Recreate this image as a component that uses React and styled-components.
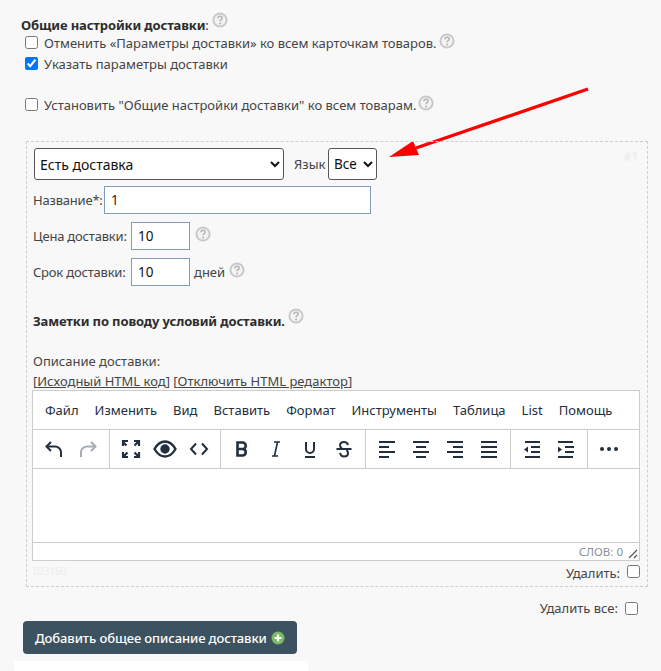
import React from "react";
import styled, { createGlobalStyle } from "styled-components";

const Global = createGlobalStyle`
  html, body { margin: 0; padding: 0; background: #f8f8f8; }
  body { font-family: "Noto Sans", "Open Sans", sans-serif; font-size: 13px; color: #444; }
`;

const Help = () => (
  <HelpIcon viewBox="0 0 16 16">
    <circle cx="8" cy="8" r="6.6" fill="#f3f3f3" stroke="#c9c9c9" strokeWidth="2" />
    <path d="M5.9 6.3c.1-1.3 1-2 2.2-2 1.2 0 2.1.7 2.1 1.8 0 1.6-2.1 1.6-2.1 3.2" fill="none" stroke="#b4b4b4" strokeWidth="1.5" />
    <circle cx="8.1" cy="11.4" r="1" fill="#b4b4b4" />
  </HelpIcon>
);

const Ico = ({ children, sw = 2, fill = "none", color = "#222f3e" }) => (
  <ToolSvg viewBox="0 0 24 24" fill={fill} stroke={color} strokeWidth={sw}>
    {children}
  </ToolSvg>
);

const lines = (rows) =>
  rows.map(([a, b, y], i) => <path key={i} d={`M${a} ${y}H${b}`} />);

const App = () => (
  <Page>
    <Global />
    <Arrow viewBox="0 0 240 80">
      <path d="M204 2 L32 61" stroke="#ff0000" strokeWidth="3.4" fill="none" />
      <path d="M5 70 L29 54 L35 68 Z" fill="#ff0000" />
    </Arrow>
    <Heading>
      <b>Общие настройки доставки</b>: <Help />
    </Heading>
    <CheckRow>
      <Check type="checkbox" readOnly />
      <span>Отменить «Параметры доставки» ко всем карточкам товаров.</span>
      <RowHelp><Help /></RowHelp>
    </CheckRow>
    <CheckRow>
      <Check type="checkbox" defaultChecked />
      <span>Указать параметры доставки</span>
    </CheckRow>
    <CheckRow $top={20}>
      <Check type="checkbox" readOnly />
      <span>Установить "Общие настройки доставки" ко всем товарам.</span>
      <RowHelp><Help /></RowHelp>
    </CheckRow>

    <Box>
      <BoxNum>#1</BoxNum>
      <SelectRow>
        <Select $w={250} $fs={14} defaultValue="a">
          <option value="a">Есть доставка</option>
        </Select>
        <LangLabel>Язык</LangLabel>
        <Select $w={49} $fs={13.5} defaultValue="a">
          <option value="a">Все</option>
        </Select>
      </SelectRow>
      <FieldRow $top={6}>
        <FieldLabel $w={68}>Название*:</FieldLabel>
        <TextInput $w={267} $red defaultValue="1" />
      </FieldRow>
      <FieldRow $top={8}>
        <FieldLabel $w={95}>Цена доставки:</FieldLabel>
        <TextInput $w={59} defaultValue="10" />
        <PriceHelp><Help /></PriceHelp>
      </FieldRow>
      <FieldRow $top={8}>
        <FieldLabel $w={95}>Срок доставки:</FieldLabel>
        <TextInput $w={59} defaultValue="10" />
        <Days>дней</Days>
        <TermHelp><Help /></TermHelp>
      </FieldRow>
      <Notes>
        <b>Заметки по поводу условий доставки.</b> <Help />
      </Notes>
      <DescLabel>Описание доставки:</DescLabel>
      <Links>
        [<a>Исходный HTML код</a>] [<a>Отключить HTML редактор</a>]
      </Links>
      <Editor>
        <MenuBar>
          {["Файл", "Изменить", "Вид", "Вставить", "Формат", "Инструменты", "Таблица", "List", "Помощь"].map((m) => (
            <span key={m}>{m}</span>
          ))}
        </MenuBar>
        <ToolBar>
          <ToolGroup>
            <Tool><Ico><path d="M9 5L4.5 9.5 9 14" /><path d="M5 9.5h8a6 6 0 0 1 6 6V20" /></Ico></Tool>
            <Tool><Ico color="#a8adb3"><path d="M15 5l4.5 4.5L15 14" /><path d="M19 9.5h-8a6 6 0 0 0-6 6V20" /></Ico></Tool>
          </ToolGroup>
          <ToolGroup>
            <Tool><Ico sw={2.2}><path d="M4 9V4h5M4 5l3.5 3.5M15 4h5v5M19 5l-3.5 3.5M4 15v5h5M5 19l3.5-3.5M20 15v5h-5M19 19l-3.5-3.5" /></Ico></Tool>
            <Tool>
              <Ico sw={2.4}><path d="M1.5 12C5 6 8.5 4.5 12 4.5s7 1.5 10.5 7.5C19 18 15.5 19.5 12 19.5S5 18 1.5 12z" /><circle cx="12" cy="12" r="3.5" fill="#222f3e" /></Ico>
            </Tool>
            <Tool><Ico sw={2}><path d="M9 6.5L4 12l5 5.5M15 6.5l5 5.5-5 5.5" /></Ico></Tool>
          </ToolGroup>
          <ToolGroup>
            <Tool><Ico sw={2.6}><path d="M7.5 5.5h5a3.2 3.2 0 0 1 0 6.5h-5zM7.5 12h5.5a3.3 3.3 0 0 1 0 6.5H7.5z" /></Ico></Tool>
            <Tool><Ico sw={1.6}><path d="M10 5h6M8 19h6M13.5 5l-3 14" /></Ico></Tool>
            <Tool><Ico sw={2}><path d="M8 5v7a4 4 0 0 0 8 0V5M7 20h10" /></Ico></Tool>
            <Tool><Ico sw={2}><path d="M4.5 12h15M16 8C15.5 6 14 5 12 5 9.5 5 8 6.5 8 8.5c0 1.5 1 2.5 2.5 3.5M8 16c.5 2 2 3.5 4 3.5 2.5 0 4-1.5 4-3.5 0-1-.5-2-1.5-3" /></Ico></Tool>
          </ToolGroup>
          <ToolGroup>
            <Tool><Ico>{lines([[4, 20, 5], [4, 14, 10], [4, 20, 15], [4, 14, 20]])}</Ico></Tool>
            <Tool><Ico>{lines([[4, 20, 5], [7, 17, 10], [4, 20, 15], [7, 17, 20]])}</Ico></Tool>
            <Tool><Ico>{lines([[4, 20, 5], [10, 20, 10], [4, 20, 15], [10, 20, 20]])}</Ico></Tool>
            <Tool><Ico>{lines([[4, 20, 5], [4, 20, 10], [4, 20, 15], [4, 20, 20]])}</Ico></Tool>
          </ToolGroup>
          <ToolGroup>
            <Tool><Ico>{lines([[5, 20, 5], [11, 20, 10], [11, 20, 15], [5, 20, 20]])}<path d="M8 9.5l-4 3 4 3z" fill="#222f3e" stroke="none" /></Ico></Tool>
            <Tool><Ico>{lines([[4, 19, 5], [11, 20, 10], [11, 20, 15], [4, 19, 20]])}<path d="M4 9.5l4 3-4 3z" fill="#222f3e" stroke="none" /></Ico></Tool>
          </ToolGroup>
          <ToolGroup $last>
            <Tool><Ico><path d="M5 12h.01M12 12h.01M19 12h.01" strokeWidth="4" strokeLinecap="round" /></Ico></Tool>
          </ToolGroup>
        </ToolBar>
        <EditArea />
        <StatusBar>
          <span>СЛОВ: 0</span>
          <Grip viewBox="0 0 10 10">
            <path d="M1 9L9 1M6 9L9 6" stroke="#555" strokeWidth="1.2" fill="none" />
          </Grip>
        </StatusBar>
      </Editor>
      <BoxFoot>
        <BoxId>ID3160</BoxId>
        <DeleteLabel>
          <DeleteText>Удалить:</DeleteText>
          <DelCheck type="checkbox" readOnly />
        </DeleteLabel>
      </BoxFoot>
    </Box>

    <DeleteAll>
      Удалить все: <DelCheck type="checkbox" readOnly />
    </DeleteAll>
    <AddButton>
      Добавить общее описание доставки
      <svg width="14" height="14" viewBox="0 0 14 14">
        <circle cx="7" cy="7" r="6.5" fill="#7dbb63" />
        <path d="M7 3.5v7M3.5 7h7" stroke="#fff" strokeWidth="2.2" />
      </svg>
    </AddButton>
    <WhiteStrip />
  </Page>
);

const Page = styled.div`
  position: relative;
  width: 661px;
  height: 671px;
  overflow: hidden;
  padding: 12px 0 0 21px;
  box-sizing: border-box;
  background: #f8f8f8;
`;

const Arrow = styled.svg`
  position: absolute;
  left: 384px;
  top: 87px;
  width: 240px;
  height: 80px;
`;

const HelpIcon = styled.svg`
  width: 16px;
  height: 16px;
  vertical-align: 2px;
`;

const Heading = styled.div`
  height: 20px;
  line-height: 20px;
  color: #333;
  b {
    color: #2c2c2c;
    letter-spacing: -0.12px;
  }
`;

const CheckRow = styled.label`
  display: flex;
  align-items: center;
  gap: 6px;
  height: 21px;
  margin-left: 3px;
  margin-top: ${(p) => p.$top || 0}px;
`;

const RowHelp = styled.span`
  display: flex;
  margin: -3px 0 0 -4px;
`;

const Check = styled.input`
  width: 13px;
  height: 13px;
  margin: 0 0 0 1px;
  flex: none;
`;

const Box = styled.div`
  position: relative;
  width: 622px;
  height: 446px;
  box-sizing: border-box;
  margin: 26px 0 0 5px;
  padding: 6px 7px 0 6px;
  border: 1px dashed #cfcfcf;
`;

const BoxNum = styled.span`
  position: absolute;
  top: 6px;
  right: 9px;
  font-size: 12px;
  font-weight: 700;
  color: #eeeeee;
`;

const SelectRow = styled.div`
  display: flex;
  align-items: center;
  margin-left: 1px;
`;

const Select = styled.select`
  width: ${(p) => p.$w}px;
  height: 32px;
  box-sizing: border-box;
  padding: 0 0 0 1px;
  font-family: "Noto Sans", sans-serif;
  font-size: ${(p) => p.$fs}px;
  color: #111;
  background: #fff;
  border: 1px solid #555;
  border-radius: 3px;
`;

const LangLabel = styled.span`
  margin-left: 10px;
  width: 34px;
`;

const FieldRow = styled.div`
  display: flex;
  align-items: center;
  height: 28px;
  gap: 3px;
  margin-top: ${(p) => p.$top}px;
`;

const FieldLabel = styled.span`
  width: ${(p) => p.$w}px;
  white-space: nowrap;
  letter-spacing: -0.2px;
`;

const TextInput = styled.input`
  width: ${(p) => p.$w}px;
  height: 28px;
  box-sizing: border-box;
  padding: 0 6px;
  font-family: "Noto Sans", sans-serif;
  font-size: 13.5px;
  color: ${(p) => (p.$red ? "#5a1010" : "#111")};
  background: #fff;
  border: 1px solid #7f9bc0;
  outline: none;
`;

const PriceHelp = styled.span`
  display: flex;
  margin: -4px 0 0 2px;
`;

const Days = styled.span`
  margin-left: 1px;
`;

const TermHelp = styled.span`
  display: flex;
  margin: -5px 0 0 1px;
`;

const Notes = styled.div`
  margin-top: 22px;
  height: 20px;
  line-height: 20px;
  color: #2c2c2c;
  b {
    letter-spacing: -0.12px;
  }
`;

const DescLabel = styled.div`
  margin-top: 23px;
  line-height: 20px;
`;

const Links = styled.div`
  line-height: 20px;
  a {
    text-decoration: underline;
    color: #444;
  }
`;

const Editor = styled.div`
  margin: -1px 0 0 -1px;
  width: 608px;
  height: 171px;
  box-sizing: border-box;
  background: #fff;
  border: 1px solid #ccc;
  display: flex;
  flex-direction: column;
`;

const MenuBar = styled.div`
  display: flex;
  align-items: center;
  gap: 16px;
  height: 38px;
  padding-left: 12px;
  font-size: 13px;
  color: #222f3e;
  border-bottom: 1px solid #ccc;
`;

const ToolBar = styled.div`
  display: flex;
  height: 38px;
  border-bottom: 1px solid #ccc;
`;

const ToolGroup = styled.div`
  display: flex;
  align-items: center;
  padding: 0 4px;
  border-right: ${(p) => (p.$last ? "none" : "1px solid #ccc")};
`;

const Tool = styled.span`
  display: flex;
  align-items: center;
  justify-content: center;
  width: 34px;
  height: 34px;
`;

const ToolSvg = styled.svg`
  width: 24px;
  height: 24px;
`;

const EditArea = styled.div`
  flex: 1;
`;

const StatusBar = styled.div`
  display: flex;
  justify-content: flex-end;
  align-items: center;
  gap: 5px;
  height: 17px;
  padding-right: 1px;
  font-size: 11.5px;
  color: #8a8f96;
  border-top: 1px solid #ccc;
`;

const Grip = styled.svg`
  width: 10px;
  height: 10px;
  margin-top: 4px;
`;

const BoxFoot = styled.div`
  display: flex;
  justify-content: space-between;
  align-items: center;
  width: 608px;
  height: 20px;
  margin-left: -1px;
`;

const BoxId = styled.span`
  font-size: 10px;
  color: #ececec;
  padding-left: 1px;
`;

const DeleteLabel = styled.label`
  display: flex;
  align-items: center;
  gap: 7px;
`;

const DeleteText = styled.span`
  margin-top: 3px;
`;

const DelCheck = styled.input`
  width: 13px;
  height: 13px;
  margin: 0;
`;

const DeleteAll = styled.label`
  display: flex;
  justify-content: flex-end;
  align-items: center;
  gap: 7px;
  width: 617px;
  height: 20px;
  margin-top: 11px;
`;

const AddButton = styled.button`
  display: flex;
  align-items: center;
  gap: 4px;
  width: 274px;
  height: 33px;
  margin: 3px 0 0 2px;
  padding: 0 0 0 12px;
  font-family: "Noto Sans", sans-serif;
  font-size: 13px;
  font-weight: 500;
  letter-spacing: -0.1px;
  color: #fff;
  background: #3d5260;
  border: none;
  border-radius: 4px;
  white-space: nowrap;
`;

const WhiteStrip = styled.div`
  position: absolute;
  left: 14px;
  top: 661px;
  width: 294px;
  height: 10px;
  background: #fff;
`;

export default App;
